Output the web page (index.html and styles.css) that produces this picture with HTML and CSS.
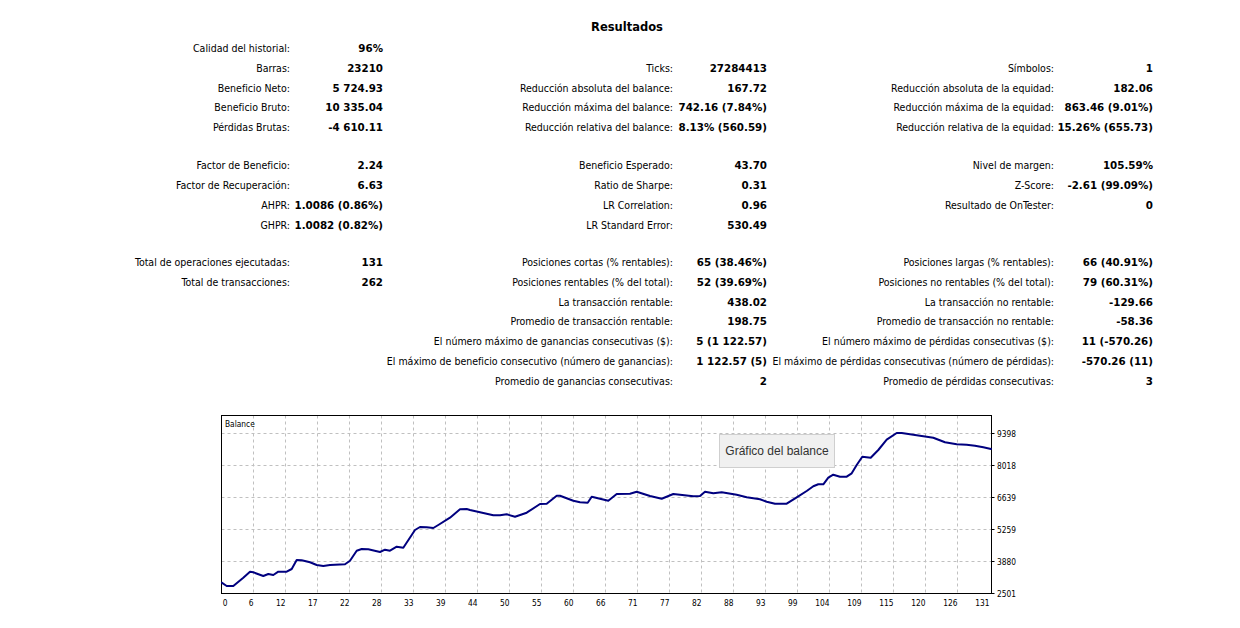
FILE: index.html
```html
<!DOCTYPE html>
<html lang="es">
<head>
<meta charset="utf-8">
<title>Resultados</title>
<link rel="stylesheet" href="styles.css">
</head>
<body>
<div class="report">
  <div class="title">Resultados</div>

  <div class="stats group-a">
    <span class="label">Calidad del historial:</span><span class="value">96%</span>
    <span class="label"></span><span class="value"></span>
    <span class="label"></span><span class="value"></span>

    <span class="label">Barras:</span><span class="value">23210</span>
    <span class="label">Ticks:</span><span class="value">27284413</span>
    <span class="label">Símbolos:</span><span class="value">1</span>

    <span class="label">Beneficio Neto:</span><span class="value">5 724.93</span>
    <span class="label">Reducción absoluta del balance:</span><span class="value">167.72</span>
    <span class="label">Reducción absoluta de la equidad:</span><span class="value">182.06</span>

    <span class="label">Beneficio Bruto:</span><span class="value">10 335.04</span>
    <span class="label">Reducción máxima del balance:</span><span class="value">742.16 (7.84%)</span>
    <span class="label">Reducción máxima de la equidad:</span><span class="value">863.46 (9.01%)</span>

    <span class="label">Pérdidas Brutas:</span><span class="value">-4 610.11</span>
    <span class="label">Reducción relativa del balance:</span><span class="value">8.13% (560.59)</span>
    <span class="label">Reducción relativa de la equidad:</span><span class="value">15.26% (655.73)</span>
  </div>

  <div class="stats group-b">
    <span class="label">Factor de Beneficio:</span><span class="value">2.24</span>
    <span class="label">Beneficio Esperado:</span><span class="value">43.70</span>
    <span class="label">Nivel de margen:</span><span class="value">105.59%</span>

    <span class="label">Factor de Recuperación:</span><span class="value">6.63</span>
    <span class="label">Ratio de Sharpe:</span><span class="value">0.31</span>
    <span class="label">Z-Score:</span><span class="value">-2.61 (99.09%)</span>

    <span class="label">AHPR:</span><span class="value">1.0086 (0.86%)</span>
    <span class="label">LR Correlation:</span><span class="value">0.96</span>
    <span class="label">Resultado de OnTester:</span><span class="value">0</span>

    <span class="label">GHPR:</span><span class="value">1.0082 (0.82%)</span>
    <span class="label">LR Standard Error:</span><span class="value">530.49</span>
    <span class="label"></span><span class="value"></span>
  </div>

  <div class="stats group-c">
    <span class="label">Total de operaciones ejecutadas:</span><span class="value">131</span>
    <span class="label">Posiciones cortas (% rentables):</span><span class="value">65 (38.46%)</span>
    <span class="label">Posiciones largas (% rentables):</span><span class="value">66 (40.91%)</span>

    <span class="label">Total de transacciones:</span><span class="value">262</span>
    <span class="label">Posiciones rentables (% del total):</span><span class="value">52 (39.69%)</span>
    <span class="label">Posiciones no rentables (% del total):</span><span class="value">79 (60.31%)</span>

    <span class="label"></span><span class="value"></span>
    <span class="label">La transacción rentable:</span><span class="value">438.02</span>
    <span class="label">La transacción no rentable:</span><span class="value">-129.66</span>

    <span class="label"></span><span class="value"></span>
    <span class="label">Promedio de transacción rentable:</span><span class="value">198.75</span>
    <span class="label">Promedio de transacción no rentable:</span><span class="value">-58.36</span>

    <span class="label"></span><span class="value"></span>
    <span class="label">El número máximo de ganancias consecutivas ($):</span><span class="value">5 (1 122.57)</span>
    <span class="label">El número máximo de pérdidas consecutivas ($):</span><span class="value">11 (-570.26)</span>

    <span class="label"></span><span class="value"></span>
    <span class="label">El máximo de beneficio consecutivo (número de ganancias):</span><span class="value">1 122.57 (5)</span>
    <span class="label">El máximo de pérdidas consecutivas (número de pérdidas):</span><span class="value">-570.26 (11)</span>

    <span class="label"></span><span class="value"></span>
    <span class="label">Promedio de ganancias consecutivas:</span><span class="value">2</span>
    <span class="label">Promedio de pérdidas consecutivas:</span><span class="value">3</span>
  </div>

  <div class="chart">
    <svg class="chart-svg" width="810" height="200" viewBox="0 0 810 200" xmlns="http://www.w3.org/2000/svg">
      <g class="grid">
        <path d="M32.5 0.5V178.5M64.5 0.5V178.5M96.5 0.5V178.5M128.5 0.5V178.5M160.5 0.5V178.5M192.5 0.5V178.5M224.5 0.5V178.5M256.5 0.5V178.5M288.5 0.5V178.5M320.5 0.5V178.5M352.5 0.5V178.5M384.5 0.5V178.5M416.5 0.5V178.5M448.5 0.5V178.5M480.5 0.5V178.5M512.5 0.5V178.5M544.5 0.5V178.5M576.5 0.5V178.5M608.5 0.5V178.5M640.5 0.5V178.5M672.5 0.5V178.5M704.5 0.5V178.5M736.5 0.5V178.5"/>
        <path d="M0.5 18.5H770.5M0.5 50.5H770.5M0.5 82.5H770.5M0.5 114.5H770.5M0.5 146.5H770.5"/>
      </g>
      <rect class="frame" x="0.5" y="0.5" width="770" height="178"/>
      <path class="ticks" d="M770.5 18.5H773.5M770.5 50.5H773.5M770.5 82.5H773.5M770.5 114.5H773.5M770.5 146.5H773.5M770.5 178.5H773.5"/>
      <text class="axis-title" x="4" y="8.5">Balance</text>
      <g class="ylabels">
        <text x="776" y="19">9398</text>
        <text x="776" y="51">8018</text>
        <text x="776" y="83">6639</text>
        <text x="776" y="115">5259</text>
        <text x="776" y="147">3880</text>
        <text x="776" y="179">2501</text>
      </g>
      <g class="xlabels">
        <text x="6.5" y="187.5">0</text>
        <text x="32.5" y="187.5">6</text>
        <text x="64.5" y="187.5">12</text>
        <text x="96.5" y="187.5">17</text>
        <text x="128.5" y="187.5">22</text>
        <text x="160.5" y="187.5">28</text>
        <text x="192.5" y="187.5">33</text>
        <text x="224.5" y="187.5">39</text>
        <text x="256.5" y="187.5">44</text>
        <text x="288.5" y="187.5">50</text>
        <text x="320.5" y="187.5">55</text>
        <text x="352.5" y="187.5">60</text>
        <text x="384.5" y="187.5">66</text>
        <text x="416.5" y="187.5">71</text>
        <text x="448.5" y="187.5">77</text>
        <text x="480.5" y="187.5">82</text>
        <text x="512.5" y="187.5">88</text>
        <text x="544.5" y="187.5">93</text>
        <text x="576.5" y="187.5">99</text>
        <text x="608.5" y="187.5">104</text>
        <text x="640.5" y="187.5">109</text>
        <text x="672.5" y="187.5">115</text>
        <text x="704.5" y="187.5">120</text>
        <text x="736.5" y="187.5">126</text>
        <text x="768.5" y="187.5">131</text>
      </g>
      <polyline class="balance" points="0.7,167.7 5.7,171 12.3,171 22.3,162.7 29,156.7 32.3,157.3 42.3,161 47.3,159 52.3,160 57.3,156.7 65.7,156.7 70.7,154 75.7,145 80.7,145.3 89,147.3 95.7,150 102.3,151 109,150 124,149.3 129,145.7 135.7,135.7 140.7,134 147.3,134.3 159,137 164,134.7 169,135.7 175.7,131.7 182.3,132.7 194,115 199,112 205.7,112.3 212.3,113 217.3,110 229,102.7 239,94.3 245.7,94 249,95 259,97.3 272.3,100.3 279,100.3 285.7,99.3 294,101.7 305.7,97.7 319,89 325.7,88.7 335.7,80.7 339,80.7 352.3,85.7 359,87.3 366.7,87.7 370.7,81.7 379,83.7 387.3,85.7 395.7,79 409,78.7 415.7,76.7 429,81 440.7,83.7 452.3,79 459,79.7 472.3,81.3 479,81 484,76.7 492.3,78.3 500.7,77.3 515.7,79.7 525.7,82.3 539,84.3 545.7,86.7 554,88.7 565.7,88.7 575.7,82.3 585.7,76 592.3,71.3 597.3,69.3 602.3,69.3 607.3,62.7 612.3,59.7 619,61.7 625.7,61.7 630.7,58.3 635.7,50 641.3,41.7 649.7,42.7 657.3,35 665.7,24.7 675.7,18 680.7,18 689,19.3 705.7,21.7 712.3,22.7 724,27.3 735.7,29.3 745.7,29.7 754,30.7 762.3,32.3 770,34"/>
    </svg>
    <div class="tooltip">Gráfico del balance</div>
  </div>
</div>
</body>
</html>
```

FILE: styles.css
```css
html, body {
  margin: 0;
  padding: 0;
  background: #ffffff;
}

body {
  color: #000000;
  font-family: "DejaVu Sans Condensed", "DejaVu Sans", sans-serif;
  font-stretch: condensed;
  font-size: 10.5px;
}

.report {
  width: 1240px;
  padding-top: 17px;
}

.title {
  height: 20px;
  line-height: 20px;
  padding-left: 14px;
  text-align: center;
  font-family: "DejaVu Sans", sans-serif;
  font-stretch: normal;
  font-weight: bold;
  font-size: 11.5px;
}

.stats {
  display: grid;
  grid-template-columns: 290px 93px 290px 94px 287px 99px;
}

.group-a {
  margin-top: 1px;
  grid-template-rows: 20px 20px 19.5px 19.5px 19.5px;
}

.group-b {
  margin-top: 18.5px;
  grid-auto-rows: 20px;
}

.group-c {
  margin-top: 17px;
  grid-auto-rows: 19.83px;
}

.label {
  display: flex;
  justify-content: flex-end;
  align-items: center;
  white-space: nowrap;
}

.value {
  display: flex;
  justify-content: flex-end;
  align-items: center;
  white-space: nowrap;
  font-family: "DejaVu Sans", sans-serif;
  font-stretch: normal;
  font-weight: bold;
  font-size: 10.3px;
}

.chart {
  position: relative;
  width: 810px;
  height: 200px;
  margin: 24px 0 0 221px;
}

.chart-svg {
  display: block;
}

.grid path {
  fill: none;
  stroke: #c0c0c0;
  stroke-width: 1;
  stroke-dasharray: 3 3;
}

.frame {
  fill: none;
  stroke: #000000;
  stroke-width: 1;
}

.ticks {
  fill: none;
  stroke: #000000;
  stroke-width: 1;
}

.chart-svg text {
  font-family: "DejaVu Sans Condensed", "DejaVu Sans", sans-serif;
  font-stretch: condensed;
  font-size: 8.3px;
  fill: #000000;
  dominant-baseline: central;
}

.xlabels text {
  text-anchor: end;
}

.balance {
  fill: none;
  stroke: #00007f;
  stroke-width: 2;
  stroke-linejoin: round;
  stroke-linecap: round;
}

.tooltip {
  position: absolute;
  left: 498px;
  top: 19px;
  width: 114px;
  height: 31px;
  padding-top: 1px;
  border: 1px solid #cfcfcf;
  background: #f0f0f0;
  color: #333333;
  font-family: "Liberation Sans", sans-serif;
  font-stretch: normal;
  font-size: 12px;
  line-height: 31px;
  text-align: center;
  box-sizing: content-box;
}
```
